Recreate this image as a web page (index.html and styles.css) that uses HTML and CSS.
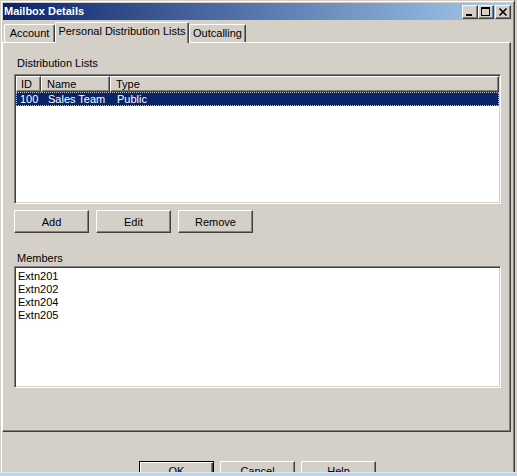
FILE: index.html
```html
<!DOCTYPE html>
<html lang="en">
<head>
    <meta charset="UTF-8">
    <title>Mailbox Details</title>
    <link rel="stylesheet" href="styles.css">
</head>
<body>
    <div class="window">
        <div class="titlebar">
            <span class="title">Mailbox Details</span>
            <div class="caption-buttons">
                <span class="cap-btn"><svg width="14" height="12" viewBox="0 0 14 12"><rect x="3" y="8" width="6" height="2"/></svg></span>
                <span class="cap-btn"><svg width="14" height="12" viewBox="0 0 14 12"><path d="M2 1h9v9H2z M3 3h7v6H3z" fill-rule="evenodd"/></svg></span>
                <span class="cap-btn cap-close"><svg width="14" height="12" viewBox="0 0 14 12"><path d="M3.5 2.5l7 7M10.5 2.5l-7 7" stroke="#000" stroke-width="1.6" fill="none"/></svg></span>
            </div>
        </div>

        <div class="tabs">
            <div class="tab tab-account">Account</div>
            <div class="tab tab-active">Personal Distribution Lists</div>
            <div class="tab tab-outcalling">Outcalling</div>
        </div>

        <div class="panel">
            <div class="group-label">Distribution Lists</div>
            <div class="listview">
                <div class="lv-header">
                    <div class="lv-head col-id">ID</div>
                    <div class="lv-head col-name">Name</div>
                    <div class="lv-head col-type">Type</div>
                </div>
                <div class="lv-row selected">
                    <div class="lv-cell col-id">100</div>
                    <div class="lv-cell col-name">Sales Team</div>
                    <div class="lv-cell col-type">Public</div>
                </div>
            </div>

            <div class="btn-row">
                <button class="btn">Add</button>
                <button class="btn">Edit</button>
                <button class="btn">Remove</button>
            </div>

            <div class="group-label members-label">Members</div>
            <div class="members">
                <div class="member">Extn201</div>
                <div class="member">Extn202</div>
                <div class="member">Extn204</div>
                <div class="member">Extn205</div>
            </div>
        </div>

        <div class="dialog-buttons">
            <button class="btn btn-default">OK</button>
            <button class="btn">Cancel</button>
            <button class="btn">Help</button>
        </div>
    </div>
    <div class="strip"></div>
</body>
</html>
```

FILE: styles.css
```css
* { box-sizing: border-box; }
body { margin: 0; background: #d4d0c8; font-family: "Liberation Sans", Arial, sans-serif; font-size: 11px; color: #000; }

/* window frame */
.window { width: 515px; height: 472px; overflow: hidden; background: #d4d0c8; border: 1px solid; border-bottom: 0; border-color: #d4d0c8 #404040 #404040 #d4d0c8; box-shadow: inset 1px 1px #fff, inset -1px 0 #808080; padding: 1px 1px 0 1px; }
.titlebar { margin: 1px 1px 0 1px; height: 17px; display: flex; align-items: center; padding: 0 1px 0 1px; background: linear-gradient(to right, #0a246a, #a6caf0); }
.title { color: #fff; font-weight: bold; line-height: 13px; }
.caption-buttons { margin-left: auto; display: flex; }
.cap-btn { width: 16px; height: 14px; display: flex; align-items: center; justify-content: center; background: #d4d0c8; border: 1px solid; border-color: #fff #404040 #404040 #fff; box-shadow: inset -1px -1px #808080; }
.cap-close { margin-left: 1px; }

/* tab strip */
.tabs { height: 22px; display: flex; align-items: flex-end; padding-left: 2px; }
.tab { height: 18px; padding-top: 2px; text-align: center; line-height: 13px; background: #d4d0c8; border: 1px solid; border-bottom: 0; border-color: #fff #404040 transparent #fff; border-radius: 2px 2px 0 0; box-shadow: inset -1px 0 #808080; }
.tab-account { width: 51px; }
.tab-outcalling { width: 57px; }
.tab-active { width: 134px; height: 21px; margin-bottom: -1px; position: relative; z-index: 1; }

.panel { width: 509px; height: 390px; border: 1px solid; border-color: #fff #404040 #404040 #fff; box-shadow: inset -1px -1px #808080; padding: 14px 9px 0 11px; }
.group-label { line-height: 13px; padding-left: 3px; }

/* list view */
.listview { margin-top: 4px; height: 130px; background: #fff; border: 1px solid; border-color: #808080 #fff #fff #808080; box-shadow: inset 1px 1px #404040, inset -1px -1px #d4d0c8; padding: 1px; }
.lv-header { display: flex; height: 16px; }
.lv-head { height: 16px; line-height: 14px; padding-left: 5px; background: #d4d0c8; border: 1px solid; border-color: #fff #404040 #404040 #fff; box-shadow: inset -1px -1px #808080; }
.lv-head.col-id { padding-left: 4px; }
.col-id { width: 25px; }
.col-name { width: 69px; }
.col-type { flex: 1; }
.lv-row { display: flex; height: 14px; line-height: 14px; }
.lv-row.selected { background: #0a246a; color: #fff; outline: 1px dotted #c8c8c8; outline-offset: -1px; }
.lv-cell { padding-left: 7px; white-space: nowrap; }
.lv-cell.col-id { padding-left: 4px; }

/* push buttons */
.btn-row { margin-top: 6px; display: flex; gap: 7px; }
.btn { width: 75px; height: 23px; padding: 0; font: inherit; color: #000; background: #d4d0c8; border: 1px solid; border-color: #fff #404040 #404040 #fff; box-shadow: inset -1px -1px #808080; }
.btn-default { border-color: #000; box-shadow: inset 1px 1px #fff, inset -1px -1px #404040, inset -2px -2px #808080; }

.members-label { margin-top: 19px; }
.members { margin-top: 1px; height: 122px; background: #fff; border: 1px solid; border-color: #808080 #fff #fff #808080; box-shadow: inset 1px 1px #404040, inset -1px -1px #d4d0c8; padding: 3px 0 0 3px; }
.member { line-height: 13px; }

.dialog-buttons { margin-top: 29px; display: flex; justify-content: center; gap: 6px; }
.dialog-buttons .btn { padding-bottom: 4px; }

.strip { height: 4px; background: #c0d4ee; border-top: 1px solid #dde8f6; }
```
